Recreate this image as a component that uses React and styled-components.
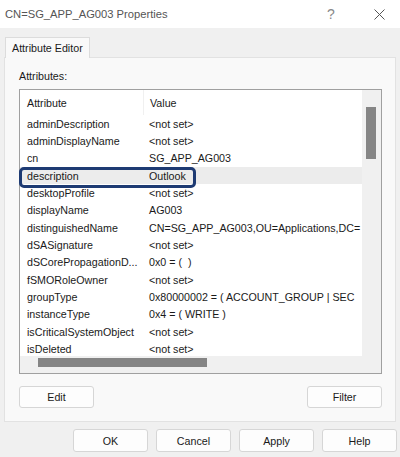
import React from 'react'
import styled, { createGlobalStyle } from 'styled-components'

const GlobalStyle = createGlobalStyle`
    html, body {
        margin: 0;
        padding: 0;
        background: #f0f0f0;
    }
    * {
        box-sizing: border-box;
    }
`

const Window = styled.div`
    width: 400px;
    height: 457px;
    background: #f0f0f0;
    font-family: "Liberation Sans", Arial, sans-serif;
    font-size: 10.7px;
    color: #1a1a1a;
    display: flex;
    flex-direction: column;
    overflow: hidden;
`

const TitleBar = styled.div`
    height: 28px;
    background: #ffffff;
    display: flex;
    align-items: center;
    padding-left: 5px;
`

const Title = styled.div`
    flex: 1;
    font-size: 11.2px;
    color: #555;
    margin-top: -1px;
`

const HelpGlyph = styled.div`
    width: 14px;
    font-size: 14px;
    color: #888;
    font-family: "Liberation Sans", Arial, sans-serif;
    margin-right: 26px;
    margin-top: -1px;
    text-align: center;
`

const CloseButton = styled.div`
    width: 30px;
    display: flex;
    justify-content: center;
    margin-right: 6px;
`

const TabStrip = styled.div`
    display: flex;
    padding: 9px 0 0 5px;
`

const Tab = styled.div`
    width: 85px;
    height: 21px;
    background: #f9f9f9;
    border: 1px solid #dcdcdc;
    border-bottom: none;
    padding: 4px 0 0 6px;
    margin-bottom: -1px;
    position: relative;
    z-index: 1;
`

const Panel = styled.div`
    margin: 0 4px;
    height: 365px;
    background: #f9f9f9;
    border: 1px solid #e2e2e2;
    padding: 12px 13px 0 14px;
    display: flex;
    flex-direction: column;
`

const Label = styled.div`
    height: 19px;
`

const ListBox = styled.div`
    position: relative;
    height: 285px;
    border: 1px solid #a0a0a0;
    display: grid;
    grid-template-columns: 1fr 19px;
    grid-template-rows: 1fr 17px;
    background: #ffffff;
`

const ListContent = styled.div`
    overflow: hidden;
    background: #ffffff;
`

const Row = styled.div`
    display: grid;
    grid-template-columns: 123px 1fr;
    height: ${p => (p.$header ? '25px' : '17.35px')};
    align-items: center;
    white-space: pre;
    background: ${p => (p.$selected ? '#ececec' : 'transparent')};
`

const Cell = styled.div`
    padding-left: ${p => (p.$first ? '7px' : '6px')};
    overflow: hidden;
    border-left: ${p => (p.$divider ? '1px solid #f0f0f0' : 'none')};
    height: 100%;
    display: flex;
    align-items: center;
`

const VScroll = styled.div`
    background: #f0f0f0;
    padding: 17px 0 0 4px;
    grid-row: 1 / 3;
    grid-column: 2;
`

const VThumb = styled.div`
    width: 10px;
    height: 52px;
    background: #858585;
`

const HScroll = styled.div`
    background: #f0f0f0;
    padding: 2px 0 0 18px;
`

const HThumb = styled.div`
    width: 169px;
    height: 9px;
    background: #858585;
`

const Highlight = styled.div`
    position: absolute;
    left: -1px;
    top: 76.5px;
    width: 177px;
    height: 21px;
    border: 3px solid #1e3b73;
    border-radius: 5px;
    pointer-events: none;
`

const ButtonRow = styled.div`
    display: flex;
    justify-content: space-between;
    padding-top: 12px;
`

const Button = styled.div`
    width: 75px;
    height: ${p => (p.$tall ? '23px' : '22px')};
    background: #fdfdfd;
    border: 1px solid #d6d6d6;
    border-radius: 3px;
    display: flex;
    align-items: center;
    justify-content: center;
`

const Footer = styled.div`
    display: flex;
    justify-content: flex-end;
    gap: 8px;
    padding: 7px 3px 0 0;
`

// values cut where the list view clips them
const rows = [
    ['adminDescription', '<not set>'],
    ['adminDisplayName', '<not set>'],
    ['cn', 'SG_APP_AG003'],
    ['description', 'Outlook'],
    ['desktopProfile', '<not set>'],
    ['displayName', 'AG003'],
    ['distinguishedName', 'CN=SG_APP_AG003,OU=Applications,DC='],
    ['dSASignature', '<not set>'],
    ['dSCorePropagationD...', '0x0 = (  )'],
    ['fSMORoleOwner', '<not set>'],
    ['groupType', '0x80000002 = ( ACCOUNT_GROUP | SEC'],
    ['instanceType', '0x4 = ( WRITE )'],
    ['isCriticalSystemObject', '<not set>'],
    ['isDeleted', '<not set>'],
]

export default function App() {
    return (
        <Window>
            <GlobalStyle />
            <TitleBar>
                <Title>CN=SG_APP_AG003 Properties</Title>
                <HelpGlyph>?</HelpGlyph>
                <CloseButton>
                    <svg width="11" height="11" viewBox="0 0 11 11">
                        <path d="M0.5 0.5 L10.5 10.5 M10.5 0.5 L0.5 10.5" stroke="#555" strokeWidth="1" />
                    </svg>
                </CloseButton>
            </TitleBar>
            <TabStrip>
                <Tab>Attribute Editor</Tab>
            </TabStrip>
            <Panel>
                <Label>Attributes:</Label>
                <ListBox>
                    <ListContent>
                        <Row $header>
                            <Cell $first>Attribute</Cell>
                            <Cell $divider>Value</Cell>
                        </Row>
                        {rows.map(([name, value]) => (
                            <Row key={name} $selected={name === 'description'}>
                                <Cell $first>{name}</Cell>
                                <Cell>{value}</Cell>
                            </Row>
                        ))}
                    </ListContent>
                    <VScroll>
                        <VThumb />
                    </VScroll>
                    <HScroll>
                        <HThumb />
                    </HScroll>
                    <Highlight />
                </ListBox>
                <ButtonRow>
                    <Button>Edit</Button>
                    <Button>Filter</Button>
                </ButtonRow>
            </Panel>
            <Footer>
                <Button $tall>OK</Button>
                <Button $tall>Cancel</Button>
                <Button $tall>Apply</Button>
                <Button $tall>Help</Button>
            </Footer>
        </Window>
    )
}
